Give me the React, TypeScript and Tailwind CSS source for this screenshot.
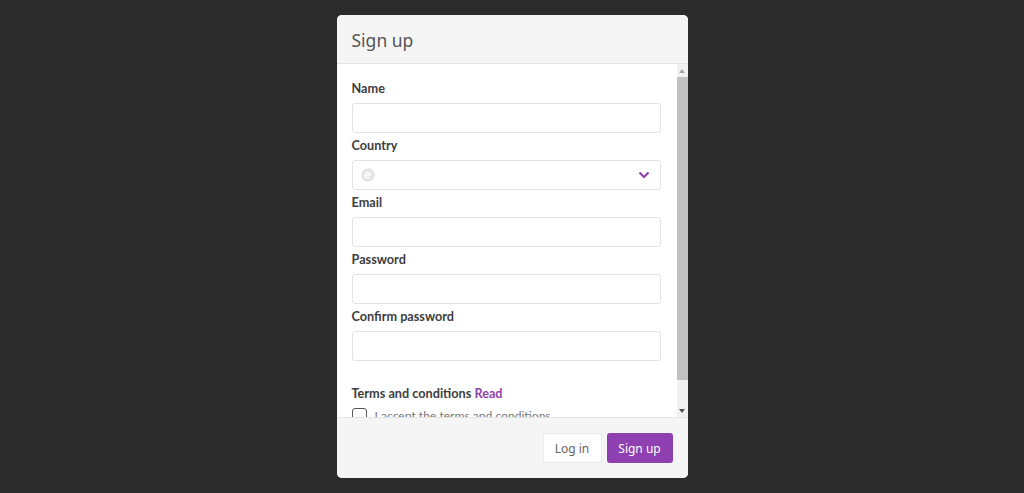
const fields = ["Name", "Country", "Email", "Password", "Confirm password"];

const App = () => {
  return (
    <div className="flex h-[493px] w-[1024px] items-center justify-center overflow-hidden bg-[#2b2b2b] font-['Lato',sans-serif]">
      <div className="flex h-[463px] w-[351px] flex-col overflow-hidden rounded-[5px] bg-white">
        {/* Header */}
        <div className="flex h-[49px] shrink-0 items-center border-b border-[#e4e4e4] bg-[#f5f5f5] pl-[15px] pr-[14px]">
          <h2 className="pt-[4px] font-['Noto_Sans',sans-serif] text-[17.5px] leading-none text-[#555]">Sign up</h2>
        </div>

        {/* Body */}
        <div className="flex min-h-0 flex-1">
          <div className="min-w-0 flex-1 overflow-hidden pl-[15px] pr-[16px] pt-[14px]">
            {fields.map((field) => (
              <div key={field} className="mb-[2px]">
                <label className="mb-[5px] block h-5 text-[12.7px] font-bold leading-5 text-[#3d3d3d]">
                  {field}
                </label>
                <div className="flex h-[30px] items-center justify-between rounded-[3px] border border-[#e3e3e3] bg-white pl-[8px] pr-[10px]">
                  {field === "Country" && (
                    <>
                      <svg width="14" height="14" viewBox="0 0 13 13">
                        <circle cx="6.5" cy="6.5" r="6.2" fill="#e4e4e4" />
                        <path d="M4 6.5h5M9 6.5a2.6 2.6 0 1 0-1 2.2" fill="none" stroke="#fff" strokeWidth="1.2" />
                      </svg>
                      <svg width="12" height="8" viewBox="0 0 12 8">
                        <path d="M1.5 1.5 6 6l4.5-4.5" fill="none" stroke="#8e44ad" strokeWidth="2.2" />
                      </svg>
                    </>
                  )}
                </div>
              </div>
            ))}

            <p className="mt-[22px] h-5 text-[12.7px] font-bold leading-5 text-[#3d3d3d]">
              Terms and conditions <span className="text-[#8e44ad]">Read</span>
            </p>
            <div className="mt-[5px] flex items-start gap-[8px]">
              <span className="h-[15px] w-[15px] shrink-0 rounded-[3px] border border-[#555] bg-white" />
              <span className="text-[12.1px] leading-[15px] text-[#777]">I accept the terms and conditions</span>
            </div>
          </div>

          {/* Scrollbar */}
          <div className="flex w-[11px] shrink-0 flex-col items-center bg-[#f1f1f1]">
            <div className="flex h-[13px] w-full items-center justify-center">
              <svg width="6" height="4" viewBox="0 0 6 4">
                <path d="M3 0 6 4H0z" fill="#a3a3a3" />
              </svg>
            </div>
            <div className="h-[303px] w-full bg-[#c1c1c1]" />
            <div className="flex-1" />
            <div className="flex h-[13px] w-full items-center justify-center">
              <svg width="6" height="4" viewBox="0 0 6 4">
                <path d="M0 0h6L3 4z" fill="#505050" />
              </svg>
            </div>
          </div>
        </div>

        {/* Footer */}
        <div className="flex h-[61px] shrink-0 items-center justify-end gap-[5px] border-t border-[#e4e4e4] bg-[#f5f5f5] pr-[15px]">
          <button className="h-[30px] w-[59px] rounded-[2px] border border-[#ebebeb] bg-white pt-px font-['Noto_Sans',sans-serif] text-[12px] text-[#666]">
            Log in
          </button>
          <button className="h-[30px] w-[66px] rounded-[3px] bg-[#8e3fb0] pt-px font-['Noto_Sans',sans-serif] text-[12px] text-white">
            Sign up
          </button>
        </div>
      </div>
    </div>
  );
};

export default App;
